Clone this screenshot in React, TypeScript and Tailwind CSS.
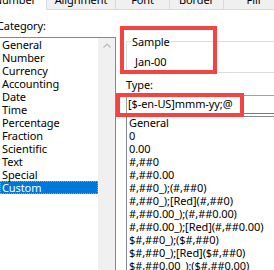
import React from 'react';

const tabs = [
  { label: 'Number', w: 'w-[46px]', selected: true },
  { label: 'Alignment', w: 'w-[69px]' },
  { label: 'Font', w: 'w-[54px]' },
  { label: 'Border', w: 'w-[54px]' },
  { label: 'Fill', w: 'w-[60px]' },
];

const categories = [
  'General', 'Number', 'Currency', 'Accounting', 'Date', 'Time',
  'Percentage', 'Fraction', 'Scientific', 'Text', 'Special', 'Custom',
];

const formats = [
  'General',
  '0',
  '0.00',
  '#,##0',
  '#,##0.00',
  '#,##0_);(#,##0)',
  '#,##0_);[Red](#,##0)',
  '#,##0.00_);(#,##0.00)',
  '#,##0.00_);[Red](#,##0.00)',
  '$#,##0_);($#,##0)',
  '$#,##0_);[Red]($#,##0)',
  '$#,##0.00_);($#,##0.00)',
];

const App: React.FC = () => {
  return (
    <div className="relative w-[274px] h-[270px] overflow-hidden bg-white text-black text-[11px] tracking-[-0.1px] font-['Noto_Sans',sans-serif]">
      {/* Tab strip */}
      <div className="flex h-[10px]">
        {tabs.map((t) =>
          t.selected ? (
            <div key={t.label} className={`${t.w} shrink-0 h-[10px] overflow-hidden bg-white flex justify-end pr-[10px]`}>
              <span className="leading-[16px] -mt-[8px] whitespace-nowrap">{t.label}</span>
            </div>
          ) : (
            <div
              key={t.label}
              className={`${t.w} shrink-0 h-[10px] overflow-hidden bg-[#f0f0f0] border-l border-b border-[#d9d9d9] flex justify-center`}
            >
              <span className="leading-[16px] -mt-[8px] whitespace-nowrap">{t.label}</span>
            </div>
          )
        )}
      </div>

      <div className="flex">
        {/* Category column */}
        <div className="w-[116px] shrink-0">
          <div className="mt-[9px] -ml-[3px] leading-[13px] h-[13px] whitespace-nowrap">Category:</div>
          <div className="mt-[5px] -ml-[1px] w-[117px] h-[260px] border border-[#828790] flex">
            <div className="w-[98px] shrink-0">
              {categories.map((c) =>
                c === 'Custom' ? (
                  <div
                    key={c}
                    className="h-[13px] leading-[11px] bg-[#0078d7] text-white border border-dotted border-[#ff8728] pl-[1px] whitespace-nowrap"
                  >
                    {c}
                  </div>
                ) : (
                  <div key={c} className="h-[13px] leading-[13px] pl-[2px] whitespace-nowrap">
                    {c}
                  </div>
                )
              )}
            </div>
            <div className="flex-1 bg-[#f0f0f0] flex justify-center pt-[5px]">
              <svg width="8" height="5" viewBox="0 0 8 5" className="block">
                <path d="M0.5 4.5 L4 1 L7.5 4.5" fill="none" stroke="#b8b8b8" strokeWidth="1.2" />
              </svg>
            </div>
          </div>
        </div>

        {/* Right column */}
        <div className="flex-1 pl-[10px]">
          <div className="relative mt-[31px] -mr-[10px] h-[32px] border-t border-l border-b border-[#dcdcdc] pt-[13px] pl-[8px]">
            <span className="absolute -top-[7px] left-[4px] px-[1px] bg-white leading-[13px]">Sample</span>
            <div className="leading-[13px]">Jan-00</div>
          </div>
          <div className="mt-[5px] leading-[13px] h-[13px]">Type:</div>
          <div className="mt-[4px] -mr-[10px] h-[19px] border border-[#a0a0a0] border-b-[#7a7a7a] flex items-center pl-[1px] whitespace-nowrap">
            [$-en-US]mmm-yy;@
          </div>
          <div className="mt-[2px] -mr-[10px] h-[200px] border border-[#828790] pl-[2px]">
            {formats.map((f) => (
              <div key={f} className="h-[13px] leading-[11px] whitespace-nowrap">
                {f}
              </div>
            ))}
          </div>
        </div>
      </div>

      {/* Red annotation boxes */}
      <div className="absolute left-[120px] top-[26px] w-[97px] h-[48px] border-4 border-[#f44343]" />
      <div className="absolute left-[116px] top-[93px] w-[128px] h-[24px] border-4 border-[#f44343]" />
    </div>
  );
};

export default App;
